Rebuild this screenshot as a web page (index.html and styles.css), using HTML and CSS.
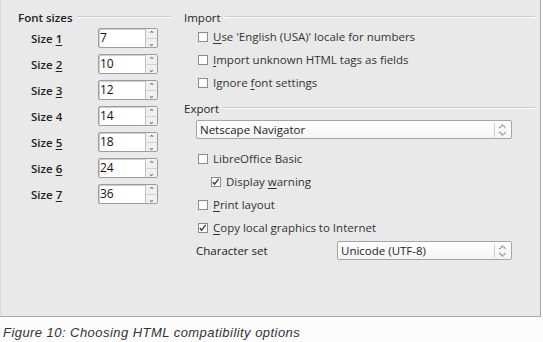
FILE: index.html
```html
<!DOCTYPE html>
<html lang="en">
<head>
    <meta charset="UTF-8">
    <title>HTML compatibility options</title>
    <link rel="stylesheet" href="styles.css">
</head>
<body>
<div class="dialog">
    <!-- Font sizes -->
    <div class="col-left">
        <div class="heading heading-bold"><span>Font sizes</span><div class="rule"></div></div>
        <div class="size-row"><span class="size-label">Size <u>1</u></span><div class="spin"><span class="spin-value">7</span><div class="spin-btn"><span>&#8963;</span><span class="down">&#8963;</span></div></div></div>
        <div class="size-row"><span class="size-label">Size <u>2</u></span><div class="spin"><span class="spin-value">10</span><div class="spin-btn"><span>&#8963;</span><span class="down">&#8963;</span></div></div></div>
        <div class="size-row"><span class="size-label">Size <u>3</u></span><div class="spin"><span class="spin-value">12</span><div class="spin-btn"><span>&#8963;</span><span class="down">&#8963;</span></div></div></div>
        <div class="size-row"><span class="size-label">Size 4</span><div class="spin"><span class="spin-value">14</span><div class="spin-btn"><span>&#8963;</span><span class="down">&#8963;</span></div></div></div>
        <div class="size-row"><span class="size-label">Size <u>5</u></span><div class="spin"><span class="spin-value">18</span><div class="spin-btn"><span>&#8963;</span><span class="down">&#8963;</span></div></div></div>
        <div class="size-row"><span class="size-label">Size <u>6</u></span><div class="spin"><span class="spin-value">24</span><div class="spin-btn"><span>&#8963;</span><span class="down">&#8963;</span></div></div></div>
        <div class="size-row"><span class="size-label">Size <u>7</u></span><div class="spin"><span class="spin-value">36</span><div class="spin-btn"><span>&#8963;</span><span class="down">&#8963;</span></div></div></div>
    </div>

    <!-- Import / Export -->
    <div class="col-right">
        <div class="heading"><span>Import</span><div class="rule"></div></div>
        <div class="check-row"><span class="box"></span><span><u>U</u>se 'English (USA)' locale for numbers</span></div>
        <div class="check-row"><span class="box"></span><span><u>I</u>mport unknown HTML tags as fields</span></div>
        <div class="check-row"><span class="box"></span><span>Ignore <u>f</u>ont settings</span></div>

        <div class="heading heading-export"><span>Export</span><div class="rule"></div></div>
        <div class="select select-wide">
            <span>Netscape Navigator</span>
            <svg class="updown" width="9" height="14" viewBox="0 0 9 14"><path d="M1.5 5 L4.5 2 L7.5 5 M1.5 9 L4.5 12 L7.5 9" fill="none" stroke="#555" stroke-width="1.1" stroke-dasharray="1.2 0.8"/></svg>
        </div>
        <div class="check-row check-first"><span class="box"></span><span>LibreOffice Basic</span></div>
        <div class="check-row check-sub"><span class="box"><svg width="10" height="10" viewBox="0 0 10 10"><path d="M2 5 L4 7.5 L8.5 1.5" fill="none" stroke="#333" stroke-width="1.4"/></svg></span><span>Display <u>w</u>arning</span></div>
        <div class="check-row"><span class="box"></span><span><u>P</u>rint layout</span></div>
        <div class="check-row"><span class="box"><svg width="10" height="10" viewBox="0 0 10 10"><path d="M2 5 L4 7.5 L8.5 1.5" fill="none" stroke="#333" stroke-width="1.4"/></svg></span><span><u>C</u>opy local graphics to Internet</span></div>
        <div class="charset-row">
            <span class="charset-label">Character set</span>
            <div class="select select-charset">
                <span>Unicode (UTF-8)</span>
                <svg class="updown" width="9" height="14" viewBox="0 0 9 14"><path d="M1.5 5 L4.5 2 L7.5 5 M1.5 9 L4.5 12 L7.5 9" fill="none" stroke="#555" stroke-width="1.1" stroke-dasharray="1.2 0.8"/></svg>
            </div>
        </div>
    </div>
</div>
<p class="caption">Figure 10: Choosing HTML compatibility options</p>
</body>
</html>
```

FILE: styles.css
```css
body {
    margin: 0;
    background: #fcfcfc;
    font-family: 'Open Sans', 'DejaVu Sans', sans-serif;
    font-size: 11.5px;
    color: #333;
}

.dialog {
    display: flex;
    width: 541px;
    height: 317px;
    box-sizing: border-box;
    padding: 9px 0 0 17px;
    background: #e9e9ea;
    border-left: 1px solid #d8d8d8;
    border-right: 1px solid #a8a8a8;
    border-bottom: 1px solid #a8a8a8;
}

u {
    text-underline-offset: 2px;
}

/* headings with trailing line */
.heading {
    display: flex;
    align-items: center;
    height: 16px;
    gap: 4px;
    color: #2e2316;
}

.heading-bold {
    font-weight: 600;
    color: #222;
}

.rule {
    flex: 1;
    height: 1px;
    background: #fff;
    border-top: 1px solid #c9c9c9;
}

.col-left {
    width: 153px;
}

.col-right {
    width: 351px;
    margin-left: 13px;
}

/* font size spin boxes */
.size-row {
    display: flex;
    align-items: center;
    height: 26px;
    padding-left: 13px;
}

.size-row:first-of-type {
    margin-top: 1px;
}

.size-label {
    width: 67px;
    color: #222;
    font-weight: 600;
}

.spin {
    display: flex;
    width: 60px;
    height: 20px;
    box-sizing: border-box;
    background: #fff;
    border: 1px solid #9c9c9c;
    border-radius: 2px;
    box-shadow: inset 1px 1px 0 #d0d0d0;
}

.spin-value {
    flex: 1;
    padding-left: 1px;
    font-size: 12px;
    line-height: 18px;
    color: #111;
}

.spin-btn {
    display: flex;
    flex-direction: column;
    width: 11px;
    border-left: 1px solid #c0c0c0;
    background: #f0f0f0;
    font-size: 8px;
    line-height: 9px;
    text-align: center;
    color: #555;
}

.spin-btn span {
    height: 9px;
}

.spin-btn .down {
    display: block;
    transform: rotate(180deg);
    border-bottom: 1px solid #d0d0d0;
}

/* checkboxes */
.check-row {
    display: flex;
    align-items: center;
    gap: 5px;
    height: 23px;
    padding-left: 14px;
}

.check-first {
    margin-top: 8px;
}

.check-sub {
    padding-left: 27px;
}

.box {
    display: flex;
    width: 10px;
    height: 10px;
    box-sizing: border-box;
    background: #fff;
    border: 1px solid #8a8a8a;
    overflow: visible;
}

.box svg {
    margin: -1px 0 0 -1px;
}

.heading-export {
    margin-top: 6px;
}

/* drop-down lists */
.select {
    display: flex;
    align-items: center;
    justify-content: space-between;
    height: 19px;
    box-sizing: border-box;
    padding: 0 4px 0 3px;
    background: linear-gradient(#ffffff, #f4f4f4);
    border: 1px solid #a4a4a4;
    border-radius: 2px;
    color: #222;
}

.select-wide {
    width: 316px;
    margin: 4px 0 0 12px;
}

.updown {
    border-left: 1px solid #cfcfcf;
    padding-left: 3px;
}

.charset-row {
    display: flex;
    align-items: center;
    height: 23px;
    padding-left: 12px;
}

.charset-label {
    width: 141px;
    color: #222;
}

.select-charset {
    width: 175px;
}

.caption {
    margin: 8px 0 0 3px;
    font-family: 'Liberation Sans', Arial, sans-serif;
    font-style: italic;
    font-size: 13px;
    letter-spacing: 0.45px;
    color: #333;
}
```
